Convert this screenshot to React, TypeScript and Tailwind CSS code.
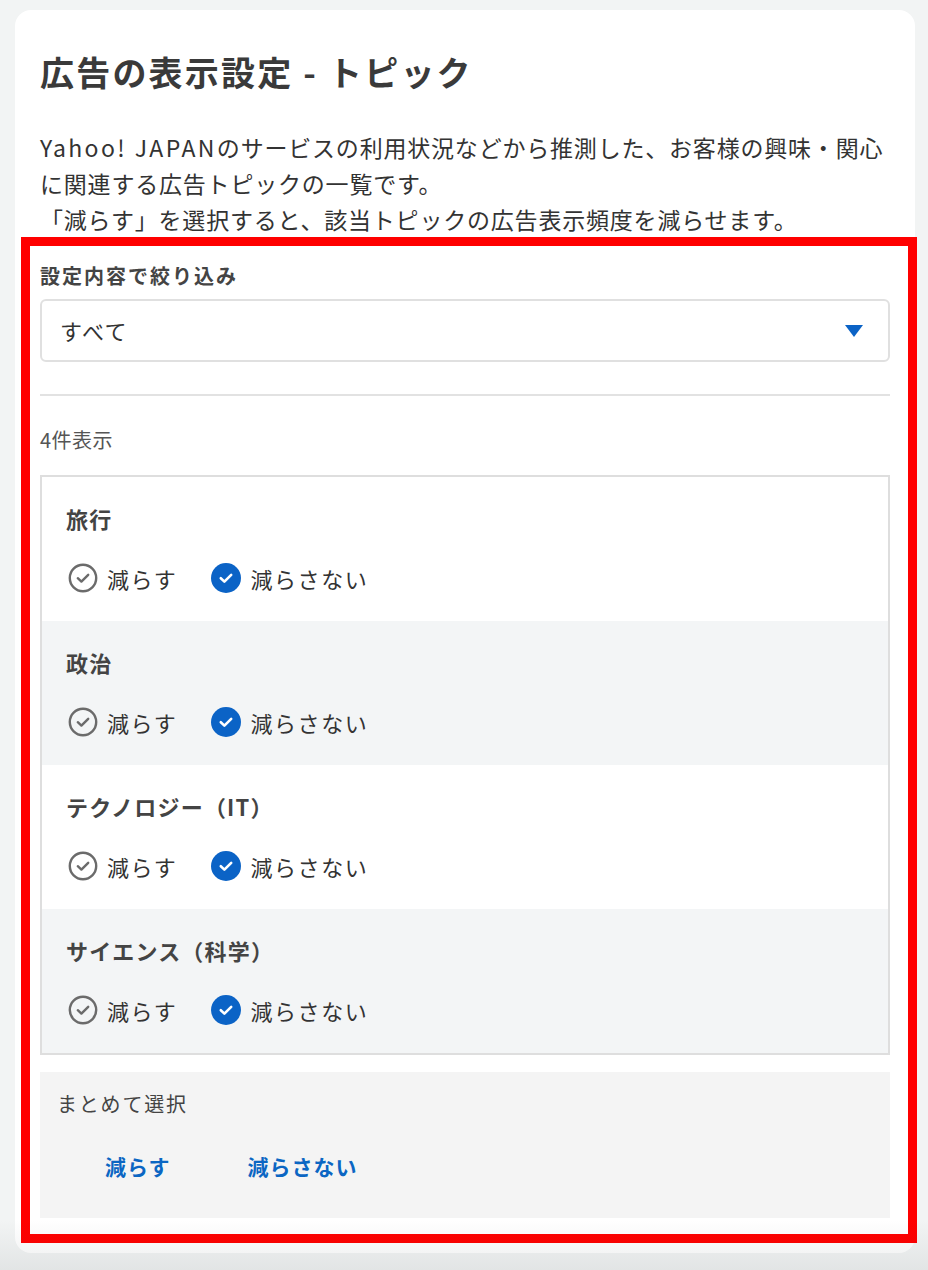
import React from "react";

const font = { fontFamily: '"Noto Sans CJK JP", "Noto Sans", sans-serif' };

function Unchecked() {
  return (
    <svg width="30" height="30" viewBox="0 0 30 30" className="shrink-0">
      <circle cx="15" cy="15" r="13.2" fill="none" stroke="#6b6b6b" strokeWidth="2.4" />
      <path d="M9.8 15.2 L13.4 18.6 L20.2 11.8" fill="none" stroke="#6b6b6b" strokeWidth="2.4" strokeLinecap="round" strokeLinejoin="round" />
    </svg>
  );
}

function Checked() {
  return (
    <svg width="30" height="30" viewBox="0 0 30 30" className="shrink-0">
      <circle cx="15" cy="15" r="15" fill="#0b63c6" />
      <path d="M9.8 15.2 L13.4 18.6 L20.2 11.8" fill="none" stroke="#ffffff" strokeWidth="2.6" strokeLinecap="round" strokeLinejoin="round" />
    </svg>
  );
}

function Row({ title, shaded }: { title: string; shaded: boolean }) {
  return (
    <div className={`h-[144px] pl-[26px] pt-[27px] ${shaded ? "bg-[#f3f5f6]" : "bg-white"}`}>
      <div className="h-[28px] leading-[28px] text-[22px] font-bold text-[#444] tracking-[1.2px] -ml-[2px]">{title}</div>
      <div className="mt-[30px] flex items-center h-[32px]">
        <div className="flex items-center">
          <Unchecked />
          <span className="ml-[9px] text-[22px] text-[#333] tracking-[1.6px]">減らす</span>
        </div>
        <div className="flex items-center ml-[34px]">
          <Checked />
          <span className="ml-[9px] text-[22px] text-[#333] tracking-[1.6px]">減らさない</span>
        </div>
      </div>
    </div>
  );
}

export default function App() {
  const topics = ["旅行", "政治", "テクノロジー（IT）", "サイエンス（科学）"];
  return (
    <div className="relative min-h-[1270px] w-[928px] bg-[#f2f4f4] pt-[10px] pl-[15px] overflow-hidden" style={font}>
      <div className="relative w-[900px] rounded-[16px] bg-white px-[25px] pt-[38px] pb-[35px]">
        <h1 className="h-[48px] leading-[48px] text-[34px] font-bold text-[#3a3a3a] tracking-[2.2px]">
          広告の表示設定 - トピック
        </h1>
        <p className="mt-[33px] text-[23px] leading-[36px] text-[#333] tracking-[0.8px] whitespace-nowrap">
          <span className="tracking-[2.4px]">Yahoo! JAPAN</span>のサービスの利用状況などから推測した、お客様の興味・関心
          <br />
          に関連する広告トピックの一覧です。
          <br />
          「減らす」を選択すると、該当トピックの広告表示頻度を減らせます。
        </p>

        <div className="mt-[25px] h-[28px] leading-[28px] text-[20px] font-bold text-[#444] tracking-[2px]">
          設定内容で絞り込み
        </div>
        <div className="mt-[9px] h-[63px] rounded-[6px] border-2 border-[#e0e0e0] flex items-center justify-between pl-[18px] pr-[25px]">
          <span className="text-[22px] text-[#333] tracking-[1.5px]">すべて</span>
          <svg width="18" height="12" viewBox="0 0 18 12">
            <path d="M0 0 L18 0 L9 12 Z" fill="#0b63c6" />
          </svg>
        </div>

        <div className="mt-[32px] h-[2px] bg-[#e2e2e2]" />

        <div className="mt-[30px] h-[28px] leading-[28px] text-[20px] text-[#555] tracking-[0.5px]">4件表示</div>

        <div className="mt-[21px] border-2 border-[#dedede]">
          {topics.map((t, i) => (
            <Row key={t} title={t} shaded={i % 2 === 1} />
          ))}
        </div>

        <div className="mt-[17px] h-[146px] bg-[#f4f4f4] pl-[17px] pt-[18px]">
          <div className="h-[28px] leading-[28px] text-[20px] text-[#444] tracking-[1.8px]">まとめて選択</div>
          <div className="mt-[34px] flex items-center h-[28px] pl-[48px]">
            <button className="text-[21px] font-bold text-[#0b66c3] tracking-[1px] leading-[28px]">減らす</button>
            <button className="ml-[77px] text-[21px] font-bold text-[#0b66c3] tracking-[1px] leading-[28px]">減らさない</button>
          </div>
        </div>

        <div className="pointer-events-none absolute left-[6px] top-[227px] w-[896px] h-[1006px] border-[9px] border-[#ff0000]" />
      </div>
      <div className="pointer-events-none absolute left-0 right-0 bottom-0 h-[50px] bg-gradient-to-b from-[rgba(0,0,0,0)] to-[rgba(40,50,55,0.08)]" />
    </div>
  );
}
